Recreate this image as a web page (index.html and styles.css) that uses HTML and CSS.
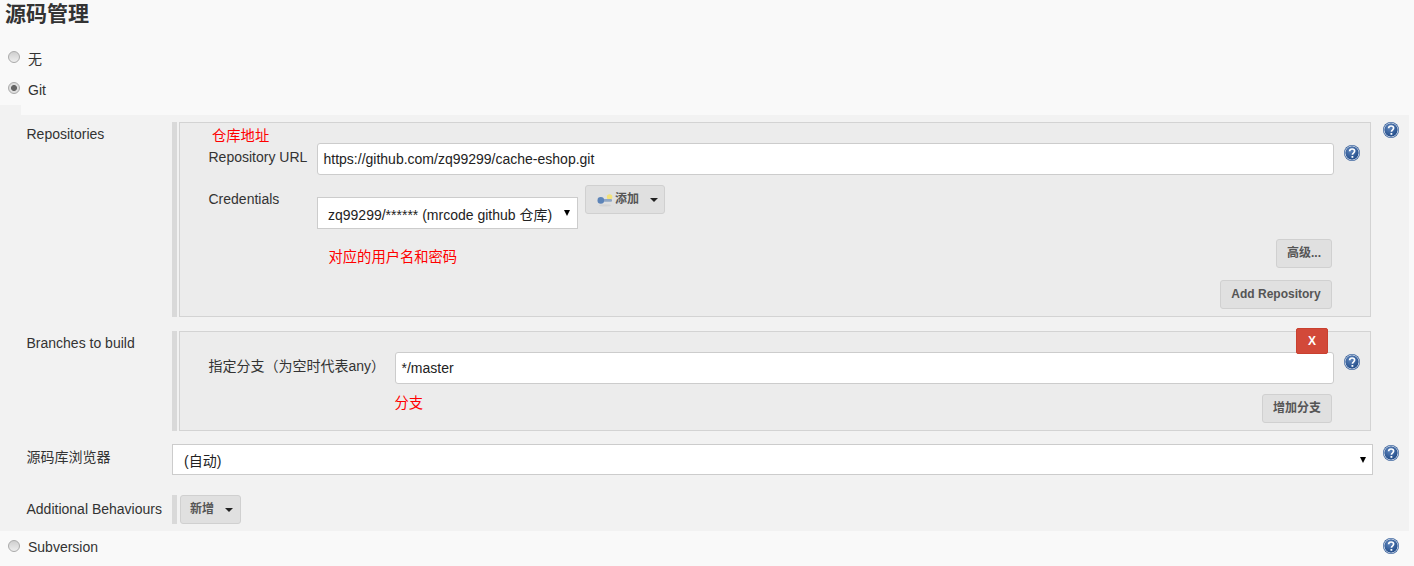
FILE: index.html
```html
<!DOCTYPE html>
<html lang="zh">
<head>
<meta charset="utf-8">
<title>源码管理</title>
<link rel="stylesheet" href="styles.css">
</head>
<body>
<svg class="defs" width="0" height="0" aria-hidden="true">
  <defs>
    <radialGradient id="hg" cx="40%" cy="30%" r="75%">
      <stop offset="0" stop-color="#5f86bd"/>
      <stop offset="1" stop-color="#204a87"/>
    </radialGradient>
    <symbol id="help" viewBox="0 0 16 16">
      <circle cx="8" cy="8" r="8" fill="#2f5a98"/>
      <circle cx="8" cy="8" r="6.9" fill="none" stroke="#fff" stroke-width=".8"/>
      <circle cx="8" cy="8" r="6.4" fill="url(#hg)"/>
      <path d="M5.6 6.2C5.7 4.7 6.8 4 8.1 4c1.4 0 2.5.8 2.5 2.1 0 1-.6 1.5-1.2 2-.6.4-.9.7-.9 1.4v.3" fill="none" stroke="#fff" stroke-width="1.7"/>
      <rect x="7.5" y="11" width="1.8" height="1.8" fill="#fff"/>
    </symbol>
  </defs>
</svg>

<h1 class="title">源码管理</h1>

<div class="radio-row">
  <span class="radio"></span><span>无</span>
</div>
<div class="radio-row">
  <span class="radio radio-on"></span><span>Git</span>
</div>
<div class="notch"></div>

<section class="git">
  <div class="row row-repo">
    <div class="label">Repositories</div>
    <div class="bar-box">
      <div class="box box-repo">
        <div class="note note-repo">仓库地址</div>
        <div class="field field-url">
          <div class="field-label">Repository URL</div>
          <div class="input">https://github.com/zq99299/cache-eshop.git</div>
          <svg class="help"><use href="#help"/></svg>
        </div>
        <div class="field field-cred">
          <div class="field-label cred-label">Credentials</div>
          <div class="select select-cred">zq99299/****** (mrcode github 仓库)<span class="arrow"></span></div>
          <button class="btn btn-add" type="button">
            <svg class="key" viewBox="0 0 16 14" width="16" height="14">
              <circle cx="12.6" cy="4" r="2.8" fill="#f3e27a"/>
              <ellipse cx="8" cy="12.4" rx="6" ry="1.2" fill="#d4d4d4"/>
              <rect x="4" y="6" width="11" height="2.8" rx="1" fill="#8fa6c4"/>
              <circle cx="3.8" cy="7.4" r="3.3" fill="#5d84b8"/>
            </svg>
            添加<span class="caret"></span>
          </button>
        </div>
        <div class="note note-cred">对应的用户名和密码</div>
        <div class="actions actions-adv"><button class="btn" type="button">高级...</button></div>
        <div class="actions actions-addrepo"><button class="btn btn-addrepo" type="button">Add Repository</button></div>
      </div>
    </div>
    <svg class="help help-row"><use href="#help"/></svg>
  </div>

  <div class="row row-branch">
    <div class="label">Branches to build</div>
    <div class="bar-box">
      <div class="box box-branch">
        <button class="btn-x" type="button">X</button>
        <div class="field field-branch">
          <div class="field-label branch-label">指定分支（为空时代表any）</div>
          <div class="input">*/master</div>
          <svg class="help"><use href="#help"/></svg>
        </div>
        <div class="note note-branch">分支</div>
        <button class="btn btn-branch" type="button">增加分支</button>
      </div>
    </div>
  </div>

  <div class="row row-browser">
    <div class="label">源码库浏览器</div>
    <div class="select select-browser">(自动)<span class="arrow"></span></div>
    <svg class="help"><use href="#help"/></svg>
  </div>

  <div class="row row-behav">
    <div class="label">Additional Behaviours</div>
    <div class="bar-only"><button class="btn btn-new" type="button">新增<span class="caret"></span></button></div>
  </div>
</section>

<div class="radio-row radio-svn">
  <span class="radio"></span><span>Subversion</span>
  <svg class="help help-svn"><use href="#help"/></svg>
</div>
</body>
</html>
```
FILE: styles.css
```css
* { box-sizing: border-box; }
html, body { margin: 0; padding: 0; }
body {
  width: 1414px;
  height: 566px;
  overflow: hidden;
  background: #f9f9f9;
  color: #333;
  font: 14px/20px "Liberation Sans", "Noto Sans CJK SC", sans-serif;
}
.defs { position: absolute; }
.title {
  margin: 0;
  height: 43px;
  padding: 0 0 0 5px;
  font-size: 21px;
  line-height: 28px;
  font-weight: 700;
  color: #333;
}
.radio-row {
  height: 31px;
  display: flex;
  align-items: center;
  padding-left: 8px;
  color: #333;
}
.radio-row > span:last-of-type { margin-left: 8px; }
.radio {
  width: 12px;
  height: 12px;
  margin-top: -3px;
  border-radius: 50%;
  border: 1px solid #aaa;
  background: linear-gradient(#cfcfcf, #eee);
  flex: none;
}
.radio-on {
  background: radial-gradient(circle, #666 0 2.6px, #dedede 3.4px);
}
.notch { width: 21px; height: 10px; background: #f2f2f2; }
.git {
  width: 1409px;
  height: 416px;
  padding: 7px 0 0 26.5px;
  background: #f2f2f2;
}
.row { display: flex; align-items: flex-start; }
.label { width: 145.5px; flex: none; color: #333; }
.bar-box {
  width: 1199px;
  border-left: 5px solid #d9d9d9;
  padding-left: 2px;
  flex: none;
}
.box {
  position: relative;
  border: 1px solid #d3d3d3;
  background: #ececec;
  height: 100%;
  padding-left: 28.5px;
}
.row-repo { height: 209px; }
.row-repo .label { padding-top: 2px; }
.box-repo { height: 195px; }
.row-repo .bar-box { height: 195px; position: relative; }
.note { color: #f00; line-height: 16px; font-size: 14.3px; }
.note-repo { padding: 6px 0 0 3.5px; height: 20px; line-height: 15px; }
.field { display: flex; align-items: flex-start; }
.field-label { flex: none; }
.field-url { height: 32px; }
.field-url .field-label { width: 108.5px; padding-top: 4px; }
.input {
  flex: 1;
  height: 32px;
  margin-right: 10px;
  padding: 5px 5.5px;
  background: #fff;
  border: 1px solid #ccc;
  border-radius: 3px;
  color: #222;
}
.help { width: 16px; height: 16px; flex: none; margin: 2px 10px 0 0; }
.help-row { margin: 0 0 0 12px; }
.field-cred { margin-top: 10px; height: 44px; }
.cred-label { width: 108.5px; padding-top: 4px; }
.select {
  position: relative;
  background: #fff;
  border: 1px solid #ccc;
  color: #222;
}
.select-cred {
  width: 261px;
  height: 32px;
  margin-top: 12px;
  padding: 7px 0 0 10px;
  white-space: nowrap;
}
.arrow {
  position: absolute;
  right: 7px;
  top: 12px;
  border: 3px solid transparent;
  border-top: 6px solid #000;
  border-bottom: 0;
}
.btn {
  height: 29px;
  padding: 0 10px;
  background: #e0e0e0;
  border: 1px solid #d0d0d0;
  border-radius: 3px;
  color: #555;
  font: 700 12px/27px "Liberation Sans", "Noto Sans CJK SC", sans-serif;
  white-space: nowrap;
}
.btn-addrepo { width: 112px; padding: 0; }
.btn-add { margin-left: 7px; width: 80px; padding: 0 0 0 11px; text-align: left; display: flex; align-items: center; }
.key { margin-right: 2px; flex: none; }
.caret {
  display: inline-block;
  margin-left: 11px;
  border: 4px solid transparent;
  border-top: 4px solid #222;
  border-bottom: 0;
}
.note-cred { padding-left: 120px; margin-top: 20px; height: 16px; }
.actions { display: flex; justify-content: flex-end; padding-right: 38px; }
.actions-adv { margin-top: -26px; }
.actions-addrepo { margin-top: 12px; }
.row-branch { height: 113px; }
.row-branch .label { padding-top: 2px; }
.row-branch .bar-box { height: 100px; }
.box-branch { padding-top: 20px; }
.btn-x {
  position: absolute;
  top: -4px;
  right: 42px;
  width: 32px;
  height: 26px;
  background: #d24939;
  border: 1px solid #c9402f;
  border-radius: 2px;
  color: #fff;
  font: 700 12px/24px "Liberation Sans", sans-serif;
  padding: 0;
}
.field-branch { height: 32px; }
.branch-label { width: 186.5px; padding-top: 4px; }
.note-branch { padding: 11px 0 0 186px; height: 27px; }
.btn-branch { position: absolute; right: 38px; bottom: 7px; }
.row-browser { height: 51px; }
.row-browser .label { padding-top: 3px; }
.select-browser {
  width: 1201px;
  height: 31px;
  padding: 6px 0 0 11px;
  flex: none;
}
.row-browser .help { margin: 1px 0 0 10px; }
.row-browser .arrow { right: 6px; top: 12px; }
.row-behav .label { padding-top: 4px; }
.bar-only { border-left: 5px solid #d9d9d9; height: 29px; padding-left: 3px; }
.btn-new { display: flex; align-items: center; padding: 0 9px; width: 61px; }
.radio-svn { position: relative; height: 35px; padding-bottom: 3px; }
.help-svn { position: absolute; left: 1383px; top: 7px; margin: 0; }
```
